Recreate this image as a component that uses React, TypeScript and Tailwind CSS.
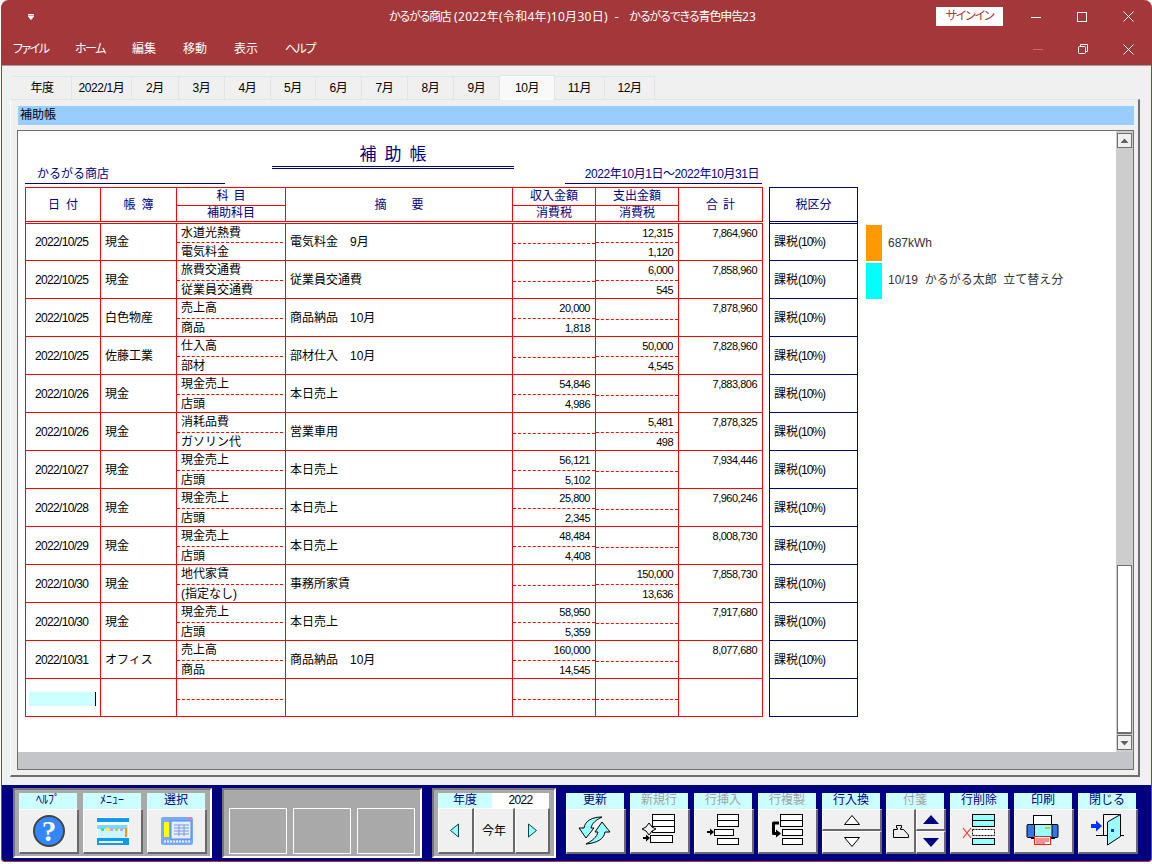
import type { ReactNode } from "react"

interface Row {
  date: string
  book: string
  sub1: string
  sub2: string
  desc: string
  inAmt?: string
  inTax?: string
  outAmt?: string
  outTax?: string
  total: string
}

const tabs = [
  { label: "年度", w: "w-[59px]" },
  { label: "2022/1月", w: "w-[60px]" },
  { label: "2月", w: "w-[47px]" },
  { label: "3月", w: "w-[46px]" },
  { label: "4月", w: "w-[46px]" },
  { label: "5月", w: "w-[45px]" },
  { label: "6月", w: "w-[46px]" },
  { label: "7月", w: "w-[46px]" },
  { label: "8月", w: "w-[46px]" },
  { label: "9月", w: "w-[46px]" },
  { label: "10月", w: "w-[55px]", active: true },
  { label: "11月", w: "w-[50px]" },
  { label: "12月", w: "w-[50px]" },
]

const rows: Row[] = [
  { date: "2022/10/25", book: "現金", sub1: "水道光熱費", sub2: "電気料金", desc: "電気料金　9月", outAmt: "12,315", outTax: "1,120", total: "7,864,960" },
  { date: "2022/10/25", book: "現金", sub1: "旅費交通費", sub2: "従業員交通費", desc: "従業員交通費", outAmt: "6,000", outTax: "545", total: "7,858,960" },
  { date: "2022/10/25", book: "白色物産", sub1: "売上高", sub2: "商品", desc: "商品納品　10月", inAmt: "20,000", inTax: "1,818", total: "7,878,960" },
  { date: "2022/10/25", book: "佐藤工業", sub1: "仕入高", sub2: "部材", desc: "部材仕入　10月", outAmt: "50,000", outTax: "4,545", total: "7,828,960" },
  { date: "2022/10/26", book: "現金", sub1: "現金売上", sub2: "店頭", desc: "本日売上", inAmt: "54,846", inTax: "4,986", total: "7,883,806" },
  { date: "2022/10/26", book: "現金", sub1: "消耗品費", sub2: "ガソリン代", desc: "営業車用", outAmt: "5,481", outTax: "498", total: "7,878,325" },
  { date: "2022/10/27", book: "現金", sub1: "現金売上", sub2: "店頭", desc: "本日売上", inAmt: "56,121", inTax: "5,102", total: "7,934,446" },
  { date: "2022/10/28", book: "現金", sub1: "現金売上", sub2: "店頭", desc: "本日売上", inAmt: "25,800", inTax: "2,345", total: "7,960,246" },
  { date: "2022/10/29", book: "現金", sub1: "現金売上", sub2: "店頭", desc: "本日売上", inAmt: "48,484", inTax: "4,408", total: "8,008,730" },
  { date: "2022/10/30", book: "現金", sub1: "地代家賃", sub2: "(指定なし)", desc: "事務所家賃", outAmt: "150,000", outTax: "13,636", total: "7,858,730" },
  { date: "2022/10/30", book: "現金", sub1: "現金売上", sub2: "店頭", desc: "本日売上", inAmt: "58,950", inTax: "5,359", total: "7,917,680" },
  { date: "2022/10/31", book: "オフィス", sub1: "売上高", sub2: "商品", desc: "商品納品　10月", inAmt: "160,000", inTax: "14,545", total: "8,077,680" },
]

const notes: Record<number, { color: string; text: string }> = {
  0: { color: "bg-[#ff9900]", text: "687kWh" },
  1: { color: "bg-[#00ffff]", text: "10/19  かるがる太郎  立て替え分" },
}

function Amount({ top, bottom, first }: { top?: string; bottom?: string; first: boolean }) {
  return (
    <div className="w-[83px] border-r border-[#ff0000] flex flex-col text-[11px] tracking-[-0.5px]">
      <div className={`${first ? "h-[20px] leading-[18px]" : "h-[21px] leading-[19px]"} border-b border-dashed border-[#ff0000] text-right pr-[5px]`}>
        {top}
      </div>
      <div className="flex-1 leading-[19px] text-right pr-[5px]">{bottom}</div>
    </div>
  )
}

function LedgerRow({ row, index }: { row: Row; index: number }) {
  const first = index === 0
  const note = notes[index]
  return (
    <div className={`flex ${first ? "h-[37px]" : "h-[38px]"}`}>
      <div className="flex w-[738px] border-l border-b border-[#ff0000] text-black">
        <div className="w-[75px] border-r border-[#ff0000] flex items-center pl-[9px] tracking-[-0.67px]">{row.date}</div>
        <div className="w-[76px] border-r border-[#ff0000] flex items-center pl-[4px]">{row.book}</div>
        <div className="w-[109px] border-r border-[#ff0000] flex flex-col">
          <div className={`${first ? "h-[20px] leading-[18px]" : "h-[21px] leading-[19px]"} mr-[2px] border-b border-dashed border-[#ff0000] pl-[4px]`}>
            {row.sub1}
          </div>
          <div className="flex-1 leading-[19px] pl-[4px]">{row.sub2}</div>
        </div>
        <div className="w-[227px] border-r border-[#ff0000] flex items-center pl-[4px]">{row.desc}</div>
        <Amount top={row.inAmt} bottom={row.inTax} first={first} />
        <Amount top={row.outAmt} bottom={row.outTax} first={first} />
        <div className="w-[84px] border-r border-[#ff0000] text-right pr-[5px] text-[11px] tracking-[-0.5px] leading-[18px]">{row.total}</div>
      </div>
      <div className="ml-[6px] w-[89px] border-x border-b border-[#000080] flex items-center pl-[4px] text-black">
        課税<span className="tracking-[-1px]">(10%)</span>
      </div>
      {note && (
        <div className="flex ml-[8px]">
          <div className={`${note.color} w-[16px] h-[36px] ${first ? "mt-[1px]" : "mt-[2px]"}`} />
          <div className="ml-[6px] flex items-center whitespace-pre text-[#333333]">{note.text}</div>
        </div>
      )}
    </div>
  )
}

function EmptyRow() {
  return (
    <div className="flex h-[38px]">
      <div className="flex w-[738px] border-l border-b border-[#ff0000]">
        <div className="w-[75px] border-r border-[#ff0000] pl-[3px] pt-[13px]">
          <div className="w-[67px] h-[14px] bg-[#ccffff] border-r border-black" />
        </div>
        <div className="w-[76px] border-r border-[#ff0000]" />
        <div className="w-[109px] border-r border-[#ff0000]">
          <div className="h-[21px] mr-[2px] border-b border-dashed border-[#ff0000]" />
        </div>
        <div className="w-[227px] border-r border-[#ff0000]" />
        <Amount first={false} />
        <Amount first={false} />
        <div className="w-[84px] border-r border-[#ff0000]" />
      </div>
      <div className="ml-[6px] w-[89px] border-x border-b border-[#000080]" />
    </div>
  )
}

function TableHeader() {
  return (
    <div className="flex h-[37px] text-[#000080]">
      <div className="flex w-[738px] border-l border-t border-b-[3px] border-b-[#ff0000] border-[#ff0000] [border-bottom-style:double]">
        <div className="w-[75px] border-r border-[#ff0000] flex items-center justify-center pl-[6px] pt-px tracking-[6px]">日付</div>
        <div className="w-[76px] border-r border-[#ff0000] flex items-center justify-center pl-[6px] pt-px tracking-[6px]">帳簿</div>
        <div className="w-[109px] border-r border-[#ff0000] flex flex-col text-center">
          <div className="h-[19px] border-b border-[#ff0000] pl-[5px] leading-[17px] tracking-[5px]">科目</div>
          <div className="flex-1 leading-[15px]">補助科目</div>
        </div>
        <div className="w-[227px] border-r border-[#ff0000] flex items-center justify-center pl-[25px] pt-px tracking-[25px]">摘要</div>
        {["収入金額", "支出金額"].map(t => (
          <div key={t} className="w-[83px] border-r border-[#ff0000] flex flex-col text-center">
            <div className="h-[19px] border-b border-[#ff0000] leading-[17px]">{t}</div>
            <div className="flex-1 leading-[15px]">消費税</div>
          </div>
        ))}
        <div className="w-[84px] border-r border-[#ff0000] flex items-center justify-center pl-[5px] pt-px tracking-[5px]">合計</div>
      </div>
      <div className="ml-[6px] w-[89px] border-x border-t border-b-[3px] border-[#000080] [border-bottom-style:double] flex items-center justify-center">
        税区分
      </div>
    </div>
  )
}

function ScrollArrow({ up }: { up: boolean }) {
  return (
    <div className="w-[15px] h-[15px] mx-auto border border-[#6e6e6e] bg-[#f0f0f0] flex items-center justify-center">
      <svg width="9" height="6" viewBox="0 0 9 6">
        <path d={up ? "M4.5 0.5 L8.5 5 H0.5 Z" : "M0.5 1 H8.5 L4.5 5.5 Z"} fill="#606060" />
      </svg>
    </div>
  )
}

function Ico({ children }: { children: ReactNode }) {
  return (
    <svg width="57" height="42" viewBox="1 1 57 42" fill="none">
      {children}
    </svg>
  )
}

function Tool({ label, disabled, children }: { label: string; disabled?: boolean; children: ReactNode }) {
  return (
    <div className="w-[60px]">
      <div className={`w-[58px] h-[16px] bg-[#ccffff] text-center leading-[15px] ${disabled ? "text-[#a0a0a0]" : "text-[#000080]"}`}>
        {label}
      </div>
      <div className="w-[60px] h-[45px] bg-[#f0f0f0] border-t border-l border-white border-r-2 border-b-2 border-r-[#696969] border-b-[#696969]">
        {children}
      </div>
    </div>
  )
}

function SmallBtn({ className, children }: { className: string; children: ReactNode }) {
  return (
    <div className={`${className} bg-[#f0f0f0] border-t border-l border-white border-r-2 border-b-2 border-r-[#696969] border-b-[#696969] flex items-center justify-center`}>
      {children}
    </div>
  )
}

function Box({ x, y, w, h, fill = "#ffffff" }: { x: number; y: number; w: number; h: number; fill?: string }) {
  return <rect x={x + 0.5} y={y + 0.5} width={w} height={h} fill={fill} stroke="#000000" />
}

const updateIcon = (
  <Ico>
    <path d="M13 19 L18 19 C19 12 26 8 36 8 C30 11 26 14 25 19 L28 19 L20 29 Z" fill="#99ffff" stroke="#000" />
    <path d="M44 23 L39 23 C38 30 31 34 20 35 C26 32 31 28 32 23 L29 23 L36 13 Z" fill="#99ffff" stroke="#000" />
  </Ico>
)

const newRowIcon = (
  <Ico>
    <Box x={22} y={5} w={22} h={18} />
    <path d="M22 11.5 H44 M22 17.5 H44" stroke="#000" />
    <Box x={20} y={26} w={22} h={7} />
    <path d="M19 14 L22 18 L26 20 L22 22 L19 26 L16 22 L12 20 L16 18 Z" fill="#f0f0f0" stroke="#000" />
    <path d="M13 28 H16 V25.5 L20 29 L16 32.5 V30 H13 Z" fill="#000" />
  </Ico>
)

const insertIcon = (
  <Ico>
    <Box x={23} y={5} w={21} h={12} />
    <path d="M23 11.5 H44" stroke="#000" />
    <Box x={20} y={20} w={19} h={6} />
    <Box x={23} y={29} w={21} h={6} />
    <path d="M13 22 H16 V19.5 L20 23 L16 26.5 V24 H13 Z" fill="#000" />
  </Ico>
)

const copyIcon = (
  <Ico>
    <Box x={22} y={5} w={22} h={12} />
    <path d="M22 11.5 H44" stroke="#000" />
    <Box x={24} y={20} w={20} h={6} />
    <Box x={24} y={29} w={20} h={6} />
    <path d="M21 14 H15.5 V24.5 H18" stroke="#000" strokeWidth="3" strokeLinejoin="round" />
    <path d="M18 20.5 L23 24.5 L18 28.5 Z" fill="#000" />
  </Ico>
)

const deleteIcon = (
  <Ico>
    <Box x={22} y={5} w={22} h={12} fill="#99ffff" />
    <path d="M22 11.5 H44" stroke="#000" />
    <rect x="22.5" y="20.5" width="22" height="6" fill="#fff" stroke="#000" strokeDasharray="2 1" />
    <Box x={22} y={29} w={22} h={6} fill="#99ffff" />
    <path d="M13 19 L21 29 M21 19 L13 29" stroke="#ff3333" strokeWidth="1.2" />
  </Ico>
)

const printIcon = (
  <Ico>
    <Box x={19} y={6} w={18} h={10} />
    <rect x="13" y="15.5" width="31" height="13" rx="1" fill="#3377ee" stroke="#000" />
    <rect x="20.5" y="15.5" width="17.5" height="13" fill="#99ffff" stroke="#000" />
    <rect x="31" y="18" width="5" height="2" fill="#ddbb33" />
    <rect x="17" y="28" width="24" height="2" fill="#000" />
    <rect x="20.5" y="27.5" width="16" height="8" fill="#fff" stroke="#ee2222" />
    <path d="M22 30 H35 M22 32 H35 M22 34 H31" stroke="#ee2222" />
  </Ico>
)

const closeIcon = (
  <Ico>
    <path d="M13 15 H18 V11.5 L24 17 L18 22.5 V19 H13 Z" fill="#0033ff" />
    <path d="M25.5 27 V5.5 H42.5" stroke="#000" />
    <path d="M29.5 13 L42.5 5.5 V27.5 L29.5 36 Z" fill="#99ffff" stroke="#000" />
    <path d="M18 26.5 H29 M43 26.5 H46" stroke="#000" />
    <rect x="33" y="20" width="3" height="3" fill="#0033ff" />
  </Ico>
)

function HelpIcon() {
  return (
    <svg width="32" height="32" viewBox="0 0 32 32">
      <circle cx="16" cy="16" r="15" fill="#3388ff" stroke="#444444" strokeWidth="2" />
      <text x="16" y="26" textAnchor="middle" fontSize="29" fontWeight="700" fontFamily="Liberation Serif" fill="#ffffff">?</text>
    </svg>
  )
}

function MenuIcon() {
  return (
    <svg width="32" height="28" viewBox="0 0 32 28">
      <rect width="32" height="28" fill="#ffffff" />
      <rect y="1" width="32" height="4" fill="#1199ee" />
      <rect x="1" y="8" width="30" height="13" fill="#ccf5ff" />
      <rect y="6" width="32" height="2" fill="#ffffff" />
      <rect y="8" width="30" height="4" fill="#77ddff" />
      <rect x="4" y="11" width="3" height="3" fill="#55ccaa" />
      <rect x="9" y="11" width="3" height="3" fill="#ffee55" />
      <rect x="13" y="11" width="3" height="3" fill="#dd99dd" />
      <rect x="18" y="11" width="3" height="3" fill="#99dd55" />
      <rect x="23" y="11" width="3" height="3" fill="#dd99dd" />
      <rect x="28" y="11" width="2" height="9" fill="#ee9922" />
      <rect y="21" width="32" height="7" fill="#1199ee" />
      <rect x="2" y="24" width="24" height="2" fill="#e8f8ff" />
    </svg>
  )
}

function SelectIcon() {
  return (
    <svg width="32" height="28" viewBox="0 0 32 28">
      <rect width="32" height="28" rx="2" fill="#77aaff" />
      <rect x="26" width="5" height="2" fill="#ff77aa" />
      <rect x="3" y="5" width="5" height="15" fill="#ffff00" />
      <rect x="10" y="4" width="20" height="18" fill="#e6eefc" stroke="#5588dd" />
      <path d="M13 8 H28 M13 11 H28 M13 14 H28 M13 17 H28 M18 8 V19 M23 8 V19" stroke="#7799dd" />
      <path d="M3 24.5 H29" stroke="#e8f0ff" strokeWidth="2" strokeDasharray="2 1" />
    </svg>
  )
}

export default function App() {
  return (
    <div className="w-[1152px] h-[864px] bg-white pl-px text-[12px] font-['Liberation_Sans','Noto_Sans_CJK_JP',sans-serif]">
      <div className="w-[1151px] h-[862px] rounded-t-lg rounded-b-sm overflow-hidden border-x border-b border-[#a4373a] bg-[#a4373a] flex flex-col">
        {/* title bar */}
        <div className="h-[33px] flex items-center text-white [font-feature-settings:'palt'] font-['Noto_Sans','Noto_Sans_CJK_JP',sans-serif]">
          <svg className="ml-[26px]" width="6" height="6" viewBox="0 0 6 6">
            <path d="M0 0.5 H6 M0 2 H6 L3 5.5 Z" stroke="#ffffff" strokeWidth="1" fill="#ffffff" />
          </svg>
          <span className="ml-[355px] w-[422px] whitespace-pre">
            <span className="tracking-[-1.2px]">かるがる商店</span>
            <span className="tracking-[0.3px]"> (2022年(令和4年)10月30日)  -   </span>
            <span className="tracking-[-1.1px]">かるがるできる青色申告</span>23
          </span>
          <div className="ml-[126px] w-[68px] h-[19px] bg-white text-[#a4373a] text-center leading-[18px] tracking-[-1.2px]">サインイン</div>
          <div className="ml-[10px] w-[46px] flex justify-center">
            <svg width="10" height="10" viewBox="0 0 10 10"><path d="M0 5.5 H10" stroke="#fff" /></svg>
          </div>
          <div className="w-[46px] flex justify-center">
            <svg width="10" height="10" viewBox="0 0 10 10"><rect x="0.5" y="0.5" width="9" height="9" stroke="#fff" fill="none" /></svg>
          </div>
          <div className="w-[46px] flex justify-center">
            <svg width="11" height="11" viewBox="0 0 11 11"><path d="M0.5 0.5 L10.5 10.5 M10.5 0.5 L0.5 10.5" stroke="#fff" /></svg>
          </div>
        </div>
        <div className="h-[32px] flex items-center text-white [font-feature-settings:'palt'] font-['Noto_Sans','Noto_Sans_CJK_JP',sans-serif]">
          <div className="pl-[11px] flex gap-[27px] w-[1013px]">
            <span className="w-[35px] whitespace-nowrap tracking-[-1.5px]">ファイル</span>
            <span className="w-[30px] whitespace-nowrap tracking-[-1.5px]">ホーム</span>
            <span className="w-[24px]">編集</span>
            <span className="w-[24px]">移動</span>
            <span className="w-[24px]">表示</span>
            <span className="w-[30px] whitespace-nowrap tracking-[-1.5px]">ヘルプ</span>
          </div>
          <div className="ml-[18px] w-[46px] flex justify-center">
            <svg width="10" height="10" viewBox="0 0 10 10"><path d="M0 5.5 H10" stroke="#c9686a" /></svg>
          </div>
          <div className="w-[46px] flex justify-center">
            <svg width="10" height="10" viewBox="0 0 10 10">
              <path d="M2.5 2.5 V0.5 H9.5 V7.5 H7.5" stroke="#fff" fill="none" />
              <rect x="0.5" y="2.5" width="7" height="7" rx="1" stroke="#fff" fill="none" />
            </svg>
          </div>
          <div className="w-[46px] flex justify-center">
            <svg width="11" height="11" viewBox="0 0 11 11"><path d="M0.5 0.5 L10.5 10.5 M10.5 0.5 L0.5 10.5" stroke="#fff" /></svg>
          </div>
        </div>

        {/* body */}
        <div className="h-[720px] bg-[#f0f0f0] border-t border-[#a0a0a0]">
          <div className="h-[33px] pl-[11px] flex items-end text-black">
            {tabs.map(t => (
              <div
                key={t.label}
                className={`${t.w} ${t.active ? "h-[25px] bg-[#f9f9f9] -mb-px" : "h-[23px] bg-[#f0f0f0]"} border-t border-r border-[#e3e3e3] flex items-center justify-center tracking-[-0.4px]`}
              >
                {t.label}
              </div>
            ))}
          </div>
          <div className="ml-[8px] w-[1130px] h-[678px] border-t border-l border-t-[#e3e3e3] border-l-white border-r-2 border-b-2 border-r-[#6e6e6e] border-b-[#6e6e6e] pt-[6px] pl-[6px]">
            <div className="ml-px w-[1116px] h-[19px] bg-[#99ccff] pl-[2px] leading-[18px] text-black">補助帳</div>
            <div className="mt-[5px] w-[1117px] h-[640px] border border-[#6e6e6e] flex flex-col">
              <div className="h-[621px] flex bg-white">
                <div className="w-[1098px] pl-[7px]">
                  <div className="h-[56px] flex pb-[3px] text-[#000080]">
                    <div className="w-[200px] border-b border-[#000080] flex items-end pl-[12px] leading-[18px]">かるがる商店</div>
                    <div className="ml-[47px] w-[242px] h-[38px] border-b-[3px] border-[#000080] [border-bottom-style:double] flex items-end justify-center pl-[8px] text-[17px] leading-[26px] font-['Noto_Sans_CJK_JP',sans-serif]">
                      <span className="tracking-[8px]">補助帳</span>
                    </div>
                    <div className="ml-[51px] w-[197px] border-b border-[#000080] flex items-end justify-end pr-[3px] leading-[18px]">
                      <span className="whitespace-nowrap tracking-[-0.45px]">2022年10月1日～2022年10月31日</span>
                    </div>
                  </div>
                  <TableHeader />
                  {rows.map((r, i) => (
                    <LedgerRow key={i} row={r} index={i} />
                  ))}
                  <EmptyRow />
                </div>
                <div className="w-[17px] bg-[#cdcdcd] flex flex-col pt-[2px] pb-[2px]">
                  <ScrollArrow up />
                  <div className="flex-1" />
                  <div className="w-[15px] h-[169px] mx-auto bg-white border border-b-2 border-[#6e6e6e]" />
                  <div className="h-[1px]" />
                  <ScrollArrow up={false} />
                </div>
              </div>
              <div className="h-[17px] bg-[#c4c5c9]" />
            </div>
          </div>
        </div>

        {/* toolbar */}
        <div className="h-[76px] bg-[#000080] flex pl-[11px] text-[#000080]">
          <div className="mt-[3px] w-[199px] h-[70px] bg-[#a9a9a9] border-t-2 border-l-2 border-t-[#777777] border-l-[#777777] border-r-2 border-b-2 border-r-white border-b-white pt-[3px] pl-[4px] flex gap-[4px]">
            <Tool label="ﾍﾙﾌﾟ">
              <div className="h-full flex items-center justify-center"><HelpIcon /></div>
            </Tool>
            <Tool label="ﾒﾆｭｰ">
              <div className="h-full flex items-center justify-center"><MenuIcon /></div>
            </Tool>
            <Tool label="選択">
              <div className="h-full flex items-center justify-center"><SelectIcon /></div>
            </Tool>
          </div>

          <div className="ml-[10px] mt-[3px] w-[200px] h-[70px] bg-[#a9a9a9] border-t-2 border-l-2 border-t-[#777777] border-l-[#777777] border-r-2 border-b-2 border-r-white border-b-white pt-[18px] pl-[5px] flex gap-[6px]">
            <div className="w-[58px] h-[46px] border border-white" />
            <div className="w-[58px] h-[46px] border border-white" />
            <div className="w-[58px] h-[46px] border border-white" />
          </div>

          <div className="ml-[10px] mt-[3px] w-[124px] h-[70px] bg-[#a9a9a9] border-t-2 border-l-2 border-t-[#777777] border-l-[#777777] border-r-2 border-b-2 border-r-white border-b-white pt-[3px] pl-[4px]">
            <div className="flex h-[15px]">
              <div className="w-[54px] bg-[#ccffff] text-center leading-[14px]">年度</div>
              <div className="w-[57px] bg-white text-center text-black leading-[15px] tracking-[-0.67px]">2022</div>
            </div>
            <div className="flex h-[46px]">
              <SmallBtn className="w-[36px] pr-[3px]">
                <svg width="11" height="15" viewBox="0 0 11 15"><path d="M9.5 1 V14 L1.5 7.5 Z" fill="#99ffff" stroke="#004444" /></svg>
              </SmallBtn>
              <SmallBtn className="w-[41px]">
                <span className="text-black">今年</span>
              </SmallBtn>
              <SmallBtn className="w-[35px]">
                <svg width="11" height="15" viewBox="0 0 11 15"><path d="M1.5 1 V14 L9.5 7.5 Z" fill="#99ffff" stroke="#004444" /></svg>
              </SmallBtn>
            </div>
          </div>

          <div className="ml-[10px] pt-[8px] flex gap-[4px]">
            <Tool label="更新">{updateIcon}</Tool>
            <Tool label="新規行" disabled>{newRowIcon}</Tool>
            <Tool label="行挿入" disabled>{insertIcon}</Tool>
            <Tool label="行複製" disabled>{copyIcon}</Tool>
            <div className="w-[60px]">
              <div className="w-[58px] h-[16px] bg-[#ccffff] text-center leading-[15px]">行入換</div>
              <SmallBtn className="w-[60px] h-[22px]">
                <svg width="16" height="10" viewBox="0 0 16 10"><path d="M8 0.5 L15.5 9.5 H0.5 Z" fill="#fff" stroke="#000" /></svg>
              </SmallBtn>
              <SmallBtn className="w-[60px] h-[23px]">
                <svg width="16" height="10" viewBox="0 0 16 10"><path d="M0.5 0.5 H15.5 L8 9.5 Z" fill="#fff" stroke="#000" /></svg>
              </SmallBtn>
            </div>
            <div className="w-[60px]">
              <div className="w-[58px] h-[16px] bg-[#ccffff] text-center leading-[15px] text-[#a0a0a0]">付箋</div>
              <div className="flex">
                <SmallBtn className="w-[30px] h-[45px]">
                  <svg width="16" height="13" viewBox="0 0 16 13" fill="none">
                    <path d="M0.5 4.5 H4.5 V3 H3.5 V0.5 H8.5 V3 H7.5 V4.5 H10.5 L15.5 10 V12.5 H0.5 Z" stroke="#000" />
                  </svg>
                </SmallBtn>
                <div className="w-[30px]">
                  <SmallBtn className="w-[30px] h-[22px]">
                    <svg width="16" height="9" viewBox="0 0 16 9"><path d="M8 0 L16 9 H0 Z" fill="#000080" /></svg>
                  </SmallBtn>
                  <SmallBtn className="w-[30px] h-[23px]">
                    <svg width="16" height="9" viewBox="0 0 16 9"><path d="M0 0 H16 L8 9 Z" fill="#000080" /></svg>
                  </SmallBtn>
                </div>
              </div>
            </div>
            <Tool label="行削除">{deleteIcon}</Tool>
            <Tool label="印刷">{printIcon}</Tool>
            <Tool label="閉じる">{closeIcon}</Tool>
          </div>
        </div>
      </div>
    </div>
  )
}
